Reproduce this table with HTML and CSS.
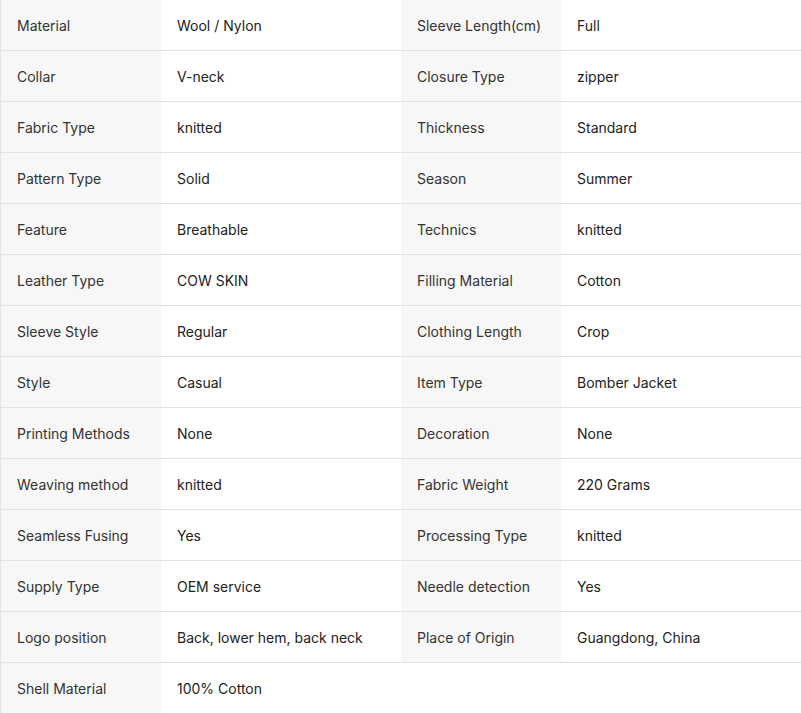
FILE: index.html
```html
<!DOCTYPE html>
<html>
<head>
<meta charset="utf-8">
<link rel="stylesheet" href="styles.css">
</head>
<body>
<table class="specs">
  <colgroup>
    <col class="c-label1"><col class="c-value"><col class="c-label"><col class="c-value">
  </colgroup>
  <tbody>
    <tr><td class="label">Material</td><td class="value">Wool / Nylon</td><td class="label">Sleeve Length(cm)</td><td class="value">Full</td></tr>
    <tr><td class="label">Collar</td><td class="value">V-neck</td><td class="label">Closure Type</td><td class="value">zipper</td></tr>
    <tr><td class="label">Fabric Type</td><td class="value">knitted</td><td class="label">Thickness</td><td class="value">Standard</td></tr>
    <tr><td class="label">Pattern Type</td><td class="value">Solid</td><td class="label">Season</td><td class="value">Summer</td></tr>
    <tr><td class="label">Feature</td><td class="value">Breathable</td><td class="label">Technics</td><td class="value">knitted</td></tr>
    <tr><td class="label">Leather Type</td><td class="value">COW SKIN</td><td class="label">Filling Material</td><td class="value">Cotton</td></tr>
    <tr><td class="label">Sleeve Style</td><td class="value">Regular</td><td class="label">Clothing Length</td><td class="value">Crop</td></tr>
    <tr><td class="label">Style</td><td class="value">Casual</td><td class="label">Item Type</td><td class="value">Bomber Jacket</td></tr>
    <tr><td class="label">Printing Methods</td><td class="value">None</td><td class="label">Decoration</td><td class="value">None</td></tr>
    <tr><td class="label">Weaving method</td><td class="value">knitted</td><td class="label">Fabric Weight</td><td class="value">220 Grams</td></tr>
    <tr><td class="label">Seamless Fusing</td><td class="value">Yes</td><td class="label">Processing Type</td><td class="value">knitted</td></tr>
    <tr><td class="label">Supply Type</td><td class="value">OEM service</td><td class="label">Needle detection</td><td class="value">Yes</td></tr>
    <tr><td class="label">Logo position</td><td class="value">Back, lower hem, back neck</td><td class="label">Place of Origin</td><td class="value">Guangdong, China</td></tr>
    <tr class="last"><td class="label">Shell Material</td><td class="value">100% Cotton</td><td class="empty"></td><td class="empty"></td></tr>
  </tbody>
</table>
</body>
</html>
```
FILE: styles.css
```css
html, body {
  margin: 0;
  padding: 0;
  background: #fff;
}
body {
  font-family: Inter, "Noto Sans", sans-serif;
  font-size: 14px;
}
.specs {
  width: 801px;
  table-layout: fixed;
  border-collapse: separate;
  border-spacing: 0;
}
.c-label1 { width: 161px; }
.c-label { width: 160px; }
.c-value { width: 240px; }
.specs td {
  height: 51px;
  padding: 0 16px;
  box-sizing: border-box;
  border-bottom: 1px solid #e3e3e3;
  vertical-align: middle;
  white-space: nowrap;
}
.specs tr td:first-child {
  border-left: 1px solid #e3e3e3;
}
.label {
  background: #f7f7f7;
  color: #333;
}
.value {
  background: #fff;
  color: #222;
}
.specs tr.last td {
  border-bottom: none;
  height: 50px;
}
.specs td.empty {
  background: #fff;
}
```
